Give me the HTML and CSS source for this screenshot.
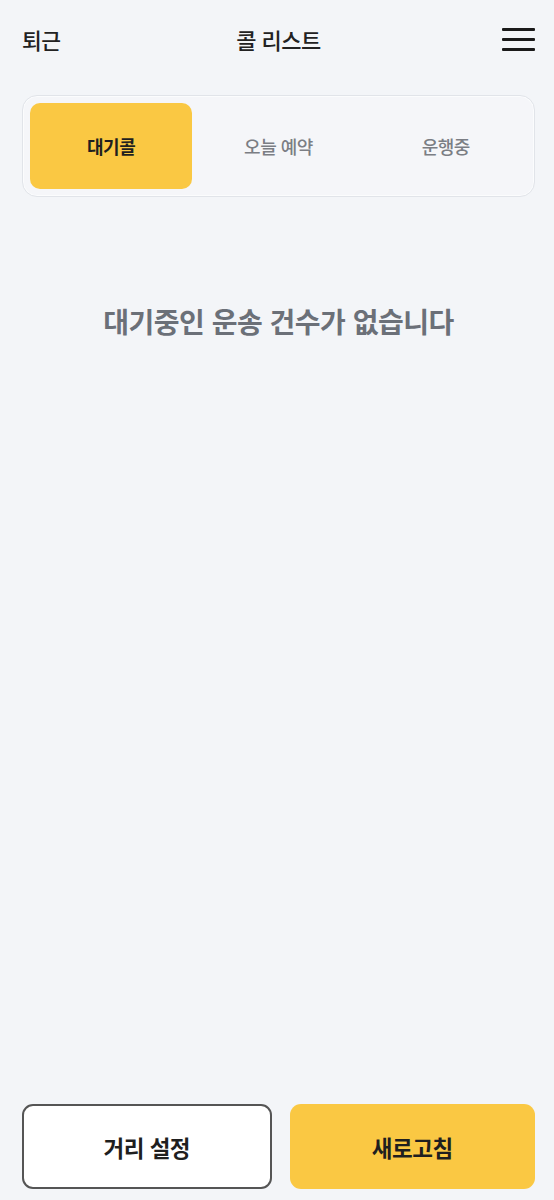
FILE: index.html
```html
<!DOCTYPE html>
<html lang="ko">
<head>
	<meta charset="UTF-8">
	<title>콜 리스트</title>
	<link rel="stylesheet" href="styles.css">
</head>
<body>
	<section class="app">
		<header class="top">
			<span class="top-left">퇴근</span>
			<h1 class="top-title">콜 리스트</h1>
			<span class="menu"><i></i><i></i><i></i></span>
		</header>
		<ul class="tabs">
			<li class="select">대기콜</li>
			<li>오늘 예약</li>
			<li>운행중</li>
		</ul>
		<div class="empty">
			<p>대기중인 운송 건수가 없습니다</p>
		</div>
		<div class="actions">
			<button class="btn btn-line">거리 설정</button>
			<button class="btn btn-fill">새로고침</button>
		</div>
	</section>
</body>
</html>
```
FILE: styles.css
```css
body, section, header, h1, ul, li, p, div {
	margin: 0;
	padding: 0;
}

body {
	background-color: #f3f5f8;
	font-family: "Noto Sans CJK KR", "Noto Sans", sans-serif;
	color: #222;
}

.app {
	width: 554px;
	height: 1200px;
	display: flex;
	flex-direction: column;
	padding: 0 19px 0 22px;
	box-sizing: border-box;
}

.top {
	height: 82px;
	display: flex;
	align-items: center;
	justify-content: space-between;
	padding-bottom: 4px;
	box-sizing: border-box;
}

.top-left {
	width: 80px;
	font-size: 21.5px;
	font-weight: 500;
	letter-spacing: -0.5px;
}

.top-title {
	font-size: 22px;
	font-weight: 500;
	letter-spacing: -0.5px;
}

.menu {
	width: 80px;
	display: flex;
	flex-direction: column;
	align-items: flex-end;
	gap: 7px;
}

.menu i {
	display: block;
	width: 33px;
	height: 3px;
	background-color: #1a1a1a;
	border-radius: 1px;
}

.tabs {
	list-style-type: none;
	display: grid;
	grid-template-columns: 1fr 1fr 1fr;
	gap: 5px;
	padding: 7px;
	border: 1px solid #e1e4e9;
	border-radius: 15px;
	background-color: #f5f6f9;
	box-shadow: inset 0 0 0 1px #fbfcfd;
	margin-top: 13px;
}

.tabs li {
	height: 86px;
	line-height: 86px;
	text-align: center;
	font-size: 18px;
	font-weight: 500;
	color: #7b7e84;
	border-radius: 10px;
	letter-spacing: -0.5px;
}

.tabs .select {
	background-color: #fac843;
	color: #1f1f1f;
	font-weight: 700;
}

.empty {
	flex: 1;
	text-align: center;
	padding-top: 104px;
}

.empty p {
	font-size: 28px;
	font-weight: 700;
	color: #6b7078;
	letter-spacing: -0.5px;
}

.actions {
	display: flex;
	gap: 18px;
	padding-bottom: 11px;
}

.btn {
	flex: 1;
	height: 85px;
	border-radius: 11px;
	font-family: "Noto Sans CJK KR", "Noto Sans", sans-serif;
	font-size: 22.5px;
	font-weight: 700;
	color: #1f1f1f;
	letter-spacing: -0.5px;
	cursor: pointer;
}

.btn-line {
	background-color: #fff;
	border: 2px solid #555;
}

.btn-fill {
	background-color: #fac843;
	border: 0;
}
```
